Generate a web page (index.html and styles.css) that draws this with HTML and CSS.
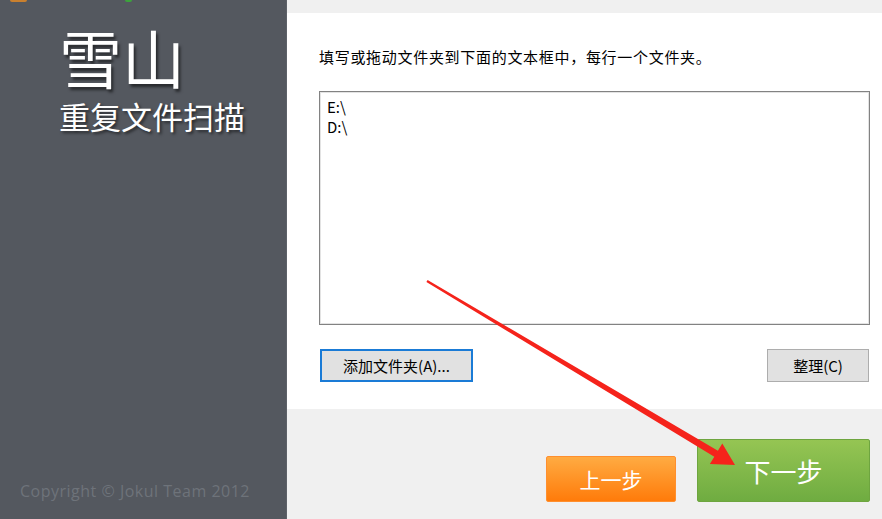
FILE: index.html
```html
<!DOCTYPE html>
<html lang="zh-CN">
<head>
  <meta charset="UTF-8" />
  <meta name="viewport" content="width=device-width, initial-scale=1" />
  <title>雪山 重复文件扫描</title>
  <link rel="stylesheet" href="styles.css">
</head>
<body>

  <div class="window">
    <!-- 左侧标题栏 -->
    <aside class="sidebar">
      <div class="app-icons">
        <span class="dot-orange"></span>
        <span class="dot-green"></span>
      </div>
      <div class="brand">雪山</div>
      <div class="subtitle">重复文件扫描</div>
      <div class="copyright">Copyright © Jokul Team 2012</div>
    </aside>

    <!-- 右侧内容 -->
    <main class="main">
      <div class="top-strip"></div>

      <div class="content">
        <p class="hint">填写或拖动文件夹到下面的文本框中，每行一个文件夹。</p>

        <div class="folder-box">
          <div>E:\</div>
          <div>D:\</div>
        </div>

        <div class="box-actions">
          <button class="win-btn focused">添加文件夹(A)...</button>
          <button class="win-btn tidy">整理(C)</button>
        </div>
      </div>

      <div class="footer">
        <button class="step-btn prev">上一步</button>
        <button class="step-btn next">下一步</button>
      </div>
    </main>

    <!-- 红色箭头标注 -->
    <svg class="arrow" width="882" height="519" viewBox="0 0 882 519">
      <polygon fill="#f5231b"
        points="427.6,280.1 717.9,450.7 722.3,443.4 735,465 709.9,464 714.3,456.7 426.4,281.9" />
    </svg>
  </div>

</body>
</html>
```

FILE: styles.css
```css
* {
  margin: 0;
  padding: 0;
  box-sizing: border-box;
}

html, body {
  width: 882px;
  height: 519px;
  overflow: hidden;
}

body {
  font-family: "Noto Sans CJK SC", "Noto Sans", sans-serif;
  color: #000;
}

.window {
  position: relative;
  display: flex;
  width: 882px;
  height: 519px;
}

/* 左侧 */
.sidebar {
  width: 286px;
  background: #54585f;
  display: flex;
  flex-direction: column;
}

.app-icons {
  height: 2px;
  display: flex;
  align-items: flex-start;
}

.dot-orange {
  width: 17px;
  height: 2px;
  margin-left: 10px;
  background: #c9802f;
  border-radius: 0 0 8px 8px;
}

.dot-green {
  width: 7px;
  height: 2px;
  margin-left: 98px;
  background: #3ca33c;
  border-radius: 0 0 4px 4px;
}

.brand {
  margin-top: 16px;
  padding-left: 59px;
  font-size: 63px;
  line-height: 1.2;
  color: #fff;
  text-shadow: 2px 3px 3px rgba(0, 0, 0, 0.55);
}

.subtitle {
  margin-top: 3px;
  padding-left: 59px;
  font-size: 31px;
  line-height: 1.2;
  color: #fff;
  text-shadow: 2px 2px 3px rgba(0, 0, 0, 0.55);
}

.copyright {
  margin-top: auto;
  padding: 0 0 18px 20px;
  font-family: "Open Sans", "Noto Sans", sans-serif;
  font-size: 16px;
  letter-spacing: 0.5px;
  line-height: 20px;
  color: #6e737a;
}

/* 右侧 */
.main {
  flex: 1;
  display: flex;
  flex-direction: column;
  border-left: 1px solid #5e6269;
}

.top-strip {
  height: 13px;
  background: #f0f0f0;
}

.content {
  flex: 1;
  background: #fff;
  padding: 0 12px 0 32px;
}

.hint {
  margin-top: 34px;
  font-size: 15px;
  letter-spacing: 0.7px;
  line-height: 20px;
}

.folder-box {
  margin-top: 24px;
  height: 234px;
  border: 1px solid #828282;
  box-shadow: inset 0 0 0 1px #e3e3e3;
  padding: 5px 7px;
  font-size: 15px;
  line-height: 20px;
}

.box-actions {
  margin-top: 24px;
  display: flex;
  justify-content: space-between;
  padding-left: 1px;
}

.win-btn {
  height: 33px;
  background: #e1e1e1;
  border: 1px solid #adadad;
  font-family: inherit;
  font-size: 15px;
  color: #000;
}

.win-btn.focused {
  width: 153px;
  border: 2px solid #1a7bd6;
}

.win-btn.tidy {
  width: 102px;
  margin-right: 1px;
}

.footer {
  height: 110px;
  background: #f0f0f0;
  display: flex;
  justify-content: flex-end;
  align-items: flex-end;
  gap: 21px;
  padding: 0 12px 17px 0;
}

.step-btn {
  font-family: inherit;
  color: #fff;
  border-radius: 2px;
}

.step-btn.prev {
  width: 130px;
  height: 46px;
  font-size: 21px;
  background: linear-gradient(#ffab42, #ff7b0a);
  border: 1px solid #ff8f2e;
}

.step-btn.next {
  width: 173px;
  height: 63px;
  font-size: 26px;
  background: linear-gradient(#95c553, #6fac41);
  border: 1px solid #6ea53f;
}

.arrow {
  position: absolute;
  top: 0;
  left: 0;
  pointer-events: none;
}
```
